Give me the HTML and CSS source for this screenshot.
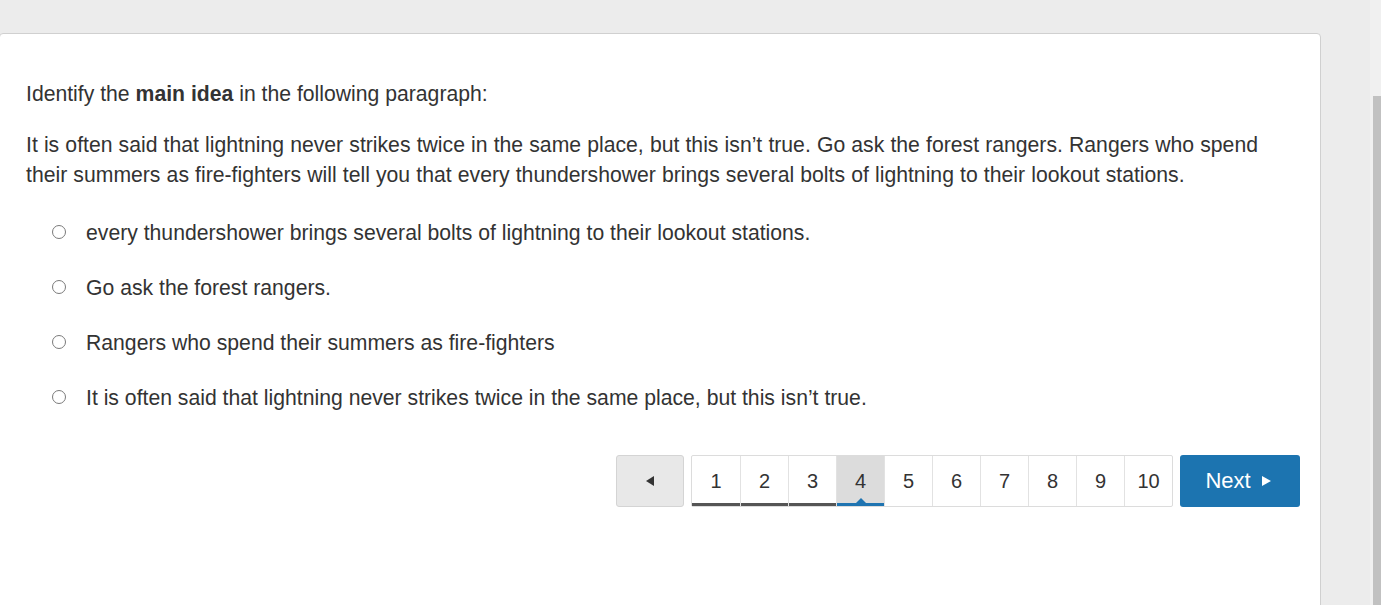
FILE: index.html
```html
<!DOCTYPE html>
<html>
<head>
<meta charset="utf-8">
<link rel="stylesheet" href="styles.css">
</head>
<body>
<div class="page">
  <main class="card">
    <p class="prompt">Identify the <strong>main idea</strong> in the following paragraph:</p>
    <p class="passage">It is often said that lightning never strikes twice in the same place, but this isn’t true. Go ask the forest rangers. Rangers who spend their summers as fire-fighters will tell you that every thundershower brings several bolts of lightning to their lookout stations.</p>
    <ul class="options">
      <li class="option"><span class="radio"></span><span>every thundershower brings several bolts of lightning to their lookout stations.</span></li>
      <li class="option"><span class="radio"></span><span>Go ask the forest rangers.</span></li>
      <li class="option"><span class="radio"></span><span>Rangers who spend their summers as fire-fighters</span></li>
      <li class="option"><span class="radio"></span><span>It is often said that lightning never strikes twice in the same place, but this isn’t true.</span></li>
    </ul>
    <nav class="pager">
      <button class="prev"><span class="tri-left"></span></button>
      <div class="pages">
        <span class="pg done">1</span>
        <span class="pg done">2</span>
        <span class="pg done">3</span>
        <span class="pg active">4</span>
        <span class="pg">5</span>
        <span class="pg">6</span>
        <span class="pg">7</span>
        <span class="pg">8</span>
        <span class="pg">9</span>
        <span class="pg">10</span>
      </div>
      <button class="next">Next <span class="tri-right"></span></button>
    </nav>
  </main>
  <div class="scrollbar"><div class="thumb"></div></div>
</div>
</body>
</html>
```

FILE: styles.css
```css
* { box-sizing: border-box; }
html, body { margin: 0; padding: 0; }
body {
  background: #ececec;
  font-family: "Liberation Sans", Arial, sans-serif;
  color: #333;
  font-size: 21.2px;
  overflow: hidden;
}
.page {
  display: flex;
  height: 605px;
  overflow: hidden;
}
.card {
  margin-top: 33px;
  margin-left: -1px;
  width: 1322px;
  flex: none;
  min-height: 700px;
  background: #fff;
  border: 1px solid #d0d0d0;
  border-radius: 4px;
  padding: 45px 20px 0 26px;
}
.prompt, .passage {
  margin: 0;
  line-height: 30px;
}
.prompt strong { font-weight: bold; }
.passage {
  margin-top: 21px;
  word-spacing: 0.25px;
}
.options {
  list-style: none;
  margin: 28px 0 0;
  padding: 0 0 0 26px;
  display: flex;
  flex-direction: column;
  gap: 25px;
}
.option {
  display: flex;
  align-items: center;
  gap: 20px;
  line-height: 30px;
}
.radio {
  width: 14px;
  height: 14px;
  border: 1px solid #7a7a7a;
  border-radius: 50%;
  flex: none;
  margin-top: -2px;
}
.pager {
  display: flex;
  justify-content: flex-end;
  gap: 7px;
  margin-top: 42px;
  font-size: 20px;
}
.prev {
  width: 68px;
  height: 52px;
  background: #e8e8e8;
  border: 1px solid #d4d4d4;
  border-radius: 3px;
  display: flex;
  align-items: center;
  justify-content: center;
  padding: 0;
}
.tri-left {
  width: 0; height: 0;
  border-top: 5px solid transparent;
  border-bottom: 5px solid transparent;
  border-right: 8px solid #333;
}
.pages {
  display: flex;
  height: 52px;
  border: 1px solid #dcdcdc;
  border-radius: 2px;
}
.pg {
  width: 48px;
  display: flex;
  align-items: center;
  justify-content: center;
  border-left: 1px solid #e2e2e2;
  position: relative;
  color: #333;
  padding-top: 1px;
}
.pg:first-child { border-left: none; }
.pg.done { box-shadow: inset 0 -3px 0 #555; }
.pg.active {
  background: #dcdcdc;
  box-shadow: inset 0 -3px 0 #1f74b1;
}
.pg.active::after {
  content: "";
  position: absolute;
  left: 50%;
  bottom: 3px;
  margin-left: -5px;
  border-left: 5px solid transparent;
  border-right: 5px solid transparent;
  border-bottom: 5px solid #1f74b1;
}
.next {
  width: 120px;
  height: 52px;
  background: #1c74b0;
  border: none;
  border-radius: 3px;
  color: #fff;
  font-family: "Liberation Sans", Arial, sans-serif;
  font-size: 22px;
  display: flex;
  align-items: center;
  justify-content: center;
  gap: 11px;
  padding: 0 4px 0 0;
}
.tri-right {
  width: 0; height: 0;
  border-top: 5px solid transparent;
  border-bottom: 5px solid transparent;
  border-left: 9px solid #fff;
}
.scrollbar {
  margin-left: auto;
  width: 11px;
  flex: none;
  background: #f0f0f0;
  padding-top: 96px;
  padding-left: 3px;
}
.thumb {
  height: 600px;
  background: #c1c1c1;
}
```
